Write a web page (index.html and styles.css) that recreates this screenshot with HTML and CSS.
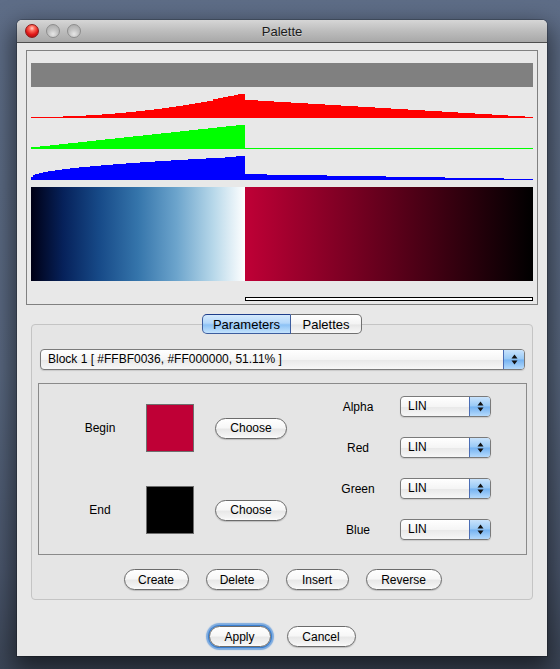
FILE: index.html
```html
<!DOCTYPE html>
<html>
<head>
<meta charset="utf-8">
<title>Palette</title>
<link rel="stylesheet" href="styles.css">
</head>
<body>
<div class="window">
  <div class="titlebar">
    <div class="lights"><span class="light close"></span><span class="light"></span><span class="light"></span></div>
    <div class="title">Palette</div>
    <div></div>
  </div>

  <div class="chart-panel">
    <div class="meanbar"></div>
    <svg class="hist" width="502" height="100" viewBox="0 0 502 100">
      <path fill="#ff0000" d="M0 31 V30 H32 V29 H55 V28 H71 V27 H84 V26 H95 V25 H105 V24 H114 V23 H123 V22 H131 V21 H138 V20 H145 V19 H152 V18 H158 V17 H164 V16 H170 V15 H176 V14 H182 V12 H187 V11 H192 V10 H197 V9 H203 V8 H207 V7 H214 V13 H227 V14 H243 V15 H260 V16 H277 V17 H294 V18 H310 V19 H327 V20 H344 V21 H360 V22 H377 V23 H394 V24 H411 V25 H427 V26 H444 V27 H461 V28 H477 V29 H494 V30 H502 V31 Z"/>
      <path fill="#00ff00" d="M0 62 V60 H9 V59 H19 V58 H28 V57 H37 V56 H47 V55 H56 V54 H65 V53 H74 V52 H84 V51 H93 V50 H102 V49 H112 V48 H121 V47 H130 V46 H140 V45 H149 V44 H158 V43 H167 V42 H177 V41 H186 V40 H195 V39 H205 V38 H214 V62 Z"/>
      <rect x="214" y="61" width="288" height="1" fill="#00ff00"/>
      <path fill="#0000ff" d="M0 93 V90 H2 V88 H4 V87 H8 V86 H12 V85 H17 V84 H24 V83 H31 V82 H39 V81 H48 V80 H59 V79 H70 V78 H82 V77 H95 V76 H109 V75 H124 V74 H140 V73 H157 V72 H175 V71 H194 V70 H205 V69 H214 V87 H236 V88 H296 V89 H355 V90 H414 V91 H473 V92 H502 V93 Z"/>
    </svg>
    <div class="grad-row"><div class="grad-a"></div><div class="grad-b"></div></div>
    <div class="marker"></div>
  </div>

  <div class="tabs">
    <div class="tab active">Parameters</div>
    <div class="tab last">Palettes</div>
  </div>

  <div class="pane">
    <div class="combo">
      <span class="combo-text">Block 1 [ #FFBF0036, #FF000000, 51.11% ]</span>
      <span class="stepper"><svg width="7" height="11" viewBox="0 0 7 11"><polygon points="0.5,4.5 3.5,0.5 6.5,4.5" fill="#111"/><polygon points="0.5,6.5 3.5,10.5 6.5,6.5" fill="#111"/></svg></span>
    </div>

    <div class="block">
      <div class="colors">
        <div class="lbl">Begin</div>
        <div class="swatch begin"></div>
        <button class="btn choose">Choose</button>
        <div class="lbl">End</div>
        <div class="swatch end"></div>
        <button class="btn choose">Choose</button>
      </div>
      <div class="channels">
        <div class="lbl">Alpha</div>
        <div class="select"><span class="val">LIN</span><span class="stepper"><svg width="7" height="11" viewBox="0 0 7 11"><polygon points="0.5,4.5 3.5,0.5 6.5,4.5" fill="#111"/><polygon points="0.5,6.5 3.5,10.5 6.5,6.5" fill="#111"/></svg></span></div>
        <div class="lbl">Red</div>
        <div class="select"><span class="val">LIN</span><span class="stepper"><svg width="7" height="11" viewBox="0 0 7 11"><polygon points="0.5,4.5 3.5,0.5 6.5,4.5" fill="#111"/><polygon points="0.5,6.5 3.5,10.5 6.5,6.5" fill="#111"/></svg></span></div>
        <div class="lbl">Green</div>
        <div class="select"><span class="val">LIN</span><span class="stepper"><svg width="7" height="11" viewBox="0 0 7 11"><polygon points="0.5,4.5 3.5,0.5 6.5,4.5" fill="#111"/><polygon points="0.5,6.5 3.5,10.5 6.5,6.5" fill="#111"/></svg></span></div>
        <div class="lbl">Blue</div>
        <div class="select"><span class="val">LIN</span><span class="stepper"><svg width="7" height="11" viewBox="0 0 7 11"><polygon points="0.5,4.5 3.5,0.5 6.5,4.5" fill="#111"/><polygon points="0.5,6.5 3.5,10.5 6.5,6.5" fill="#111"/></svg></span></div>
      </div>
    </div>

    <div class="actions">
      <button class="btn b-create">Create</button>
      <button class="btn b-delete">Delete</button>
      <button class="btn b-insert">Insert</button>
      <button class="btn b-reverse">Reverse</button>
    </div>
  </div>

  <div class="dialog-buttons">
    <button class="btn b-apply">Apply</button>
    <button class="btn b-cancel">Cancel</button>
  </div>
</div>
</body>
</html>
```

FILE: styles.css
```css
* { box-sizing: border-box; }
html, body { margin: 0; }
body {
  width: 560px;
  height: 669px;
  overflow: hidden;
  padding: 20px 0 0 17px;
  background: linear-gradient(180deg, #5e6d87 0%, #58677f 55%, #4a566c 85%, #3c4657 100%);
  font-family: "Liberation Sans", Arial, sans-serif;
  font-size: 12px;
  color: #000;
}
.window {
  width: 530px;
  height: 636px;
  background: #e8e8e8;
  border-radius: 5px 5px 0 0;
  box-shadow: 0 10px 24px 4px rgba(0, 0, 0, 0.55), 0 0 0 1px rgba(0, 0, 0, 0.2);
  display: flex;
  flex-direction: column;
  align-items: flex-start;
}
.titlebar {
  width: 100%;
  height: 23px;
  border-bottom: 1px solid #4f4f4f;
  border-radius: 5px 5px 0 0;
  background: linear-gradient(#d6d6d6, #bdbdbd 50%, #a8a8a8);
  display: grid;
  grid-template-columns: 1fr auto 1fr;
  align-items: center;
  padding-left: 8px;
}
.lights { display: flex; gap: 7px; }
.light {
  width: 14px;
  height: 14px;
  border-radius: 50%;
  border: 1px solid #8d8d8d;
  background: radial-gradient(circle at 50% 75%, #e6e6e6 0%, #c2c2c2 45%, #a5a5a5 100%);
}
.light.close {
  border-color: #8a1a1a;
  background: radial-gradient(circle at 50% 28%, #ffd0c8 0%, #ff6a5a 25%, #e01818 60%, #9a0c0c 100%);
}
.title {
  font-size: 13px;
  color: #1b1b1b;
  text-shadow: 0 1px 0 rgba(255, 255, 255, 0.35);
  padding-right: 8px;
}

.chart-panel {
  margin: 7px 0 0 9px;
  width: 512px;
  height: 255px;
  border: 1px solid #808080;
  padding: 12px 4px 0 4px;
}
.meanbar { height: 24px; background: #808080; }
.hist { display: block; width: 502px; height: 100px; }
.grad-row { display: flex; height: 94px; }
.grad-a {
  width: 214px;
  background: linear-gradient(to right, #000015 0%, #06215a 15%, #174a88 32%, #3575ab 50%, #6ca4cc 68%, #b6d7e9 85%, #ffffff 100%);
}
.grad-b { flex: 1; background: linear-gradient(to right, #bf0036, #000000); }
.marker {
  margin: 16px 0 0 214px;
  width: 288px;
  height: 4px;
  border: 1px solid #000;
  background: #fff;
}

.tabs {
  display: flex;
  height: 20px;
  margin-top: 9px;
  align-self: center;
  position: relative;
  z-index: 1;
}
.tab {
  height: 20px;
  font-size: 13px;
  display: flex;
  align-items: center;
  justify-content: center;
  border: 1px solid #707070;
  background: linear-gradient(#ffffff, #f3f3f3 50%, #e6e6e6 55%, #f8f8f8);
}
.tab.active {
  width: 89px;
  border-color: #3d5d9e;
  border-top-color: #1d3c8a;
  border-radius: 5px 0 0 5px;
  background: linear-gradient(#d5eafd, #b3d7fa 45%, #8dc2f5 55%, #c4e3fd);
}
.tab.last {
  width: 71px;
  border-left: none;
  border-radius: 0 5px 5px 0;
}

.pane {
  margin: -10px 0 0 14px;
  width: 502px;
  height: 276px;
  border: 1px solid #c4c4c4;
  border-radius: 4px;
  background: #e5e5e5;
  padding: 24px 5px 0 6px;
}
.combo {
  margin: 0 2px;
  height: 21px;
  border: 1px solid #7a7a7a;
  border-radius: 4px;
  display: flex;
  background: linear-gradient(#ffffff, #f5f5f5 50%, #e9e9e9 55%, #f7f7f7);
  box-shadow: 0 1px 1px rgba(0, 0, 0, 0.12);
}
.combo-text { flex: 1; padding-left: 7px; line-height: 19px; }
.stepper {
  width: 21px;
  display: flex;
  align-items: center;
  justify-content: center;
  border-left: 1px solid #4a6db5;
  border-radius: 0 3px 3px 0;
  background: linear-gradient(#c9e3fc, #98c9f6 48%, #74b2f1 52%, #b5dafc);
}
.stepper svg { display: block; }

.block {
  margin-top: 13px;
  height: 172px;
  border: 1px solid #8a8a8a;
  display: flex;
  align-items: flex-start;
}
.lbl { text-align: center; }
.colors {
  margin: 20px 0 0 21px;
  display: grid;
  grid-template-columns: 86px 69px 72px;
  grid-template-rows: 48px 48px;
  row-gap: 34px;
  align-items: center;
}
.colors .lbl { padding-right: 6px; }
.swatch { width: 48px; height: 48px; border: 1px solid #6e6e6e; }
.swatch.begin { background: #bf0036; }
.swatch.end { background: #000; }
.channels {
  margin: 12px 0 0 43px;
  display: grid;
  grid-template-columns: 70px 91px;
  grid-template-rows: repeat(4, 21px);
  row-gap: 20px;
  align-items: center;
}
.channels .lbl { padding-right: 14px; }
.select {
  width: 91px;
  height: 21px;
  border: 1px solid #7a7a7a;
  border-radius: 4px;
  display: flex;
  background: linear-gradient(#ffffff, #f5f5f5 50%, #e9e9e9 55%, #f7f7f7);
  box-shadow: 0 1px 1px rgba(0, 0, 0, 0.12);
}
.select .val { flex: 1; padding-left: 7px; line-height: 19px; }

.btn {
  height: 21px;
  padding: 0;
  border: 1px solid #6b6b6b;
  border-radius: 11px;
  background: linear-gradient(#ffffff 0%, #f7f7f7 45%, #e8e8e8 55%, #f2f2f2 85%, #fbfbfb 100%);
  font-family: "Liberation Sans", Arial, sans-serif;
  font-size: 12px;
  color: #000;
  box-shadow: 0 1px 1px rgba(0, 0, 0, 0.18);
}
.choose { width: 72px; }
.actions {
  margin-top: 14px;
  display: flex;
  justify-content: center;
  gap: 17px;
}
.b-create { width: 65px; }
.b-delete { width: 63px; }
.b-insert { width: 63px; }
.b-reverse { width: 76px; }

.dialog-buttons {
  margin-top: 26px;
  align-self: center;
  display: flex;
  gap: 16px;
}
.b-apply {
  width: 62px;
  box-shadow: 0 0 0 1px #3a7fd0, 0 0 1px 3px rgba(88, 150, 220, 0.75);
}
.b-cancel { width: 69px; }
```
